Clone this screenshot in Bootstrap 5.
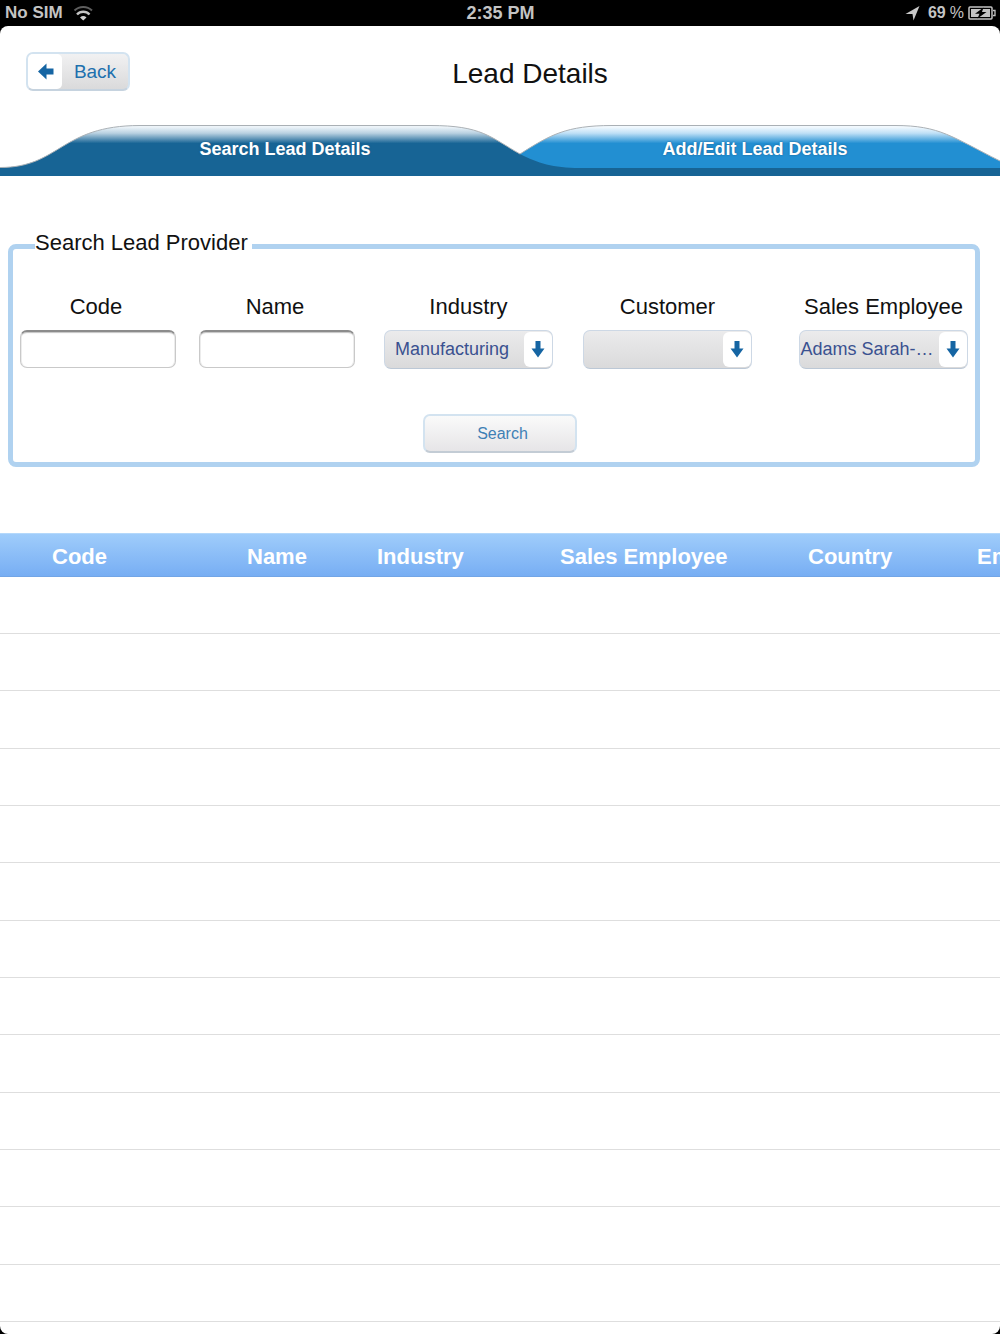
<!DOCTYPE html>
<html lang="en">
<head>
<meta charset="utf-8">
<meta name="viewport" content="width=device-width, initial-scale=1">
<title>Lead Details</title>
<link rel="stylesheet" href="https://cdn.jsdelivr.net/npm/bootstrap@5.3.0/dist/css/bootstrap.min.css">
<style>
body { background: #000; font-family: "Liberation Sans", Arial, sans-serif; color: #111; }
.status-bar { height: 26px; color: #c4c4c4; font-weight: 700; font-size: 17px; line-height: 26px; padding: 0 4px 0 5px; }
.status-side { flex: 1 1 0; }
.status-clock { font-size: 18px; }
.status-power { font-size: 16px; }
.app-sheet { border-radius: 8px; overflow: hidden; }

.top-row { height: 99px; padding: 26px 26px 0; display: grid; grid-template-columns: 1fr auto 1fr; align-items: start; }
.page-title { font-size: 28px; line-height: 44px; margin: 0 -60px 0 0; font-weight: 400; }
.glossy { border: 2px solid #d3e3f0; border-radius: 7px; background: linear-gradient(#f1f1f2, #dadadb); padding: 0; }
.back-btn { width: 104px; height: 39px; color: #2070ae; font-size: 19px; line-height: 36px; border-bottom-color: #c6d3df; }
.back-cap { width: 34px; background: #fff; border-radius: 5px; padding-left: 2px; }
.search-btn { width: 154px; height: 39px; color: #3f80b5; font-size: 16px; line-height: 34px; background: linear-gradient(#fafafa, #e6e5e7); border-bottom-color: #c3ccd5; padding-left: 5px; }

.tab-strip { height: 51px; }
.tab-shape { position: absolute; inset: 0; width: 100%; height: 100%; }
.tab-link { position: relative; color: #fff; font-size: 18px; font-weight: 700; line-height: 48px; text-decoration: none; text-align: center; text-shadow: 0 0 2px #1a5d8c; }
.tab-link:hover { color: #fff; }
.tab-search { width: 52%; padding-left: 50px; }
.tab-edit { width: 48%; padding-right: 10px; }

.search-box { margin: 57px 20px 0 8px; border: 5px solid #b0d2f0; border-radius: 8px; padding: 35px 7px 9px; }
.search-legend { font-size: 22px; line-height: 20px; background: #fff; padding: 0 4px 6px 0; margin: 0 0 0 15px; }
.field-grid { display: grid; grid-template-columns: 179fr 185fr 199fr 216fr 169px; }
.field-label { display: block; width: 100%; text-align: center; font-size: 22px; line-height: 26px; margin-bottom: 10px; white-space: nowrap; }
.text-cell { width: 156px; }
.text-cell .field-label { padding-right: 4px; }
.pick-cell { width: 169px; }
.text-entry { height: 38px; border: 1px solid #c9c9c9; border-top: 2px solid #8c8c8c; border-radius: 7px; box-shadow: inset 0 2px 1px -1px #c4c4c4, inset 1px 0 #ececec, inset -1px 0 #ececec; }
.pick-wrap { height: 39px; }
.pick-entry { appearance: none; height: 39px; border: 1px solid #cdd8e5; border-bottom-color: #bcc8d6; border-radius: 7px; background: linear-gradient(#ebebec, #dadadb); color: #3a5190; font-size: 18px; padding: 0 33px 0 0; text-align: center; text-align-last: center; width: 100%; }
.pick-cap { position: absolute; top: 2px; right: 1px; bottom: 2px; width: 28px; border-radius: 6px; background: #fff; pointer-events: none; }
.search-row { margin: 45px -12px 0 0; }

.lead-scroll { margin-top: 66px; overflow: hidden; }
.lead-table { width: 112%; table-layout: fixed; border-collapse: separate; border-spacing: 0; margin: 0; }
.lead-table thead tr { background: linear-gradient(#a0cdfb, #76adf3); }
.lead-table th { height: 44px; padding: 4px 0 0 52px; font-size: 22px; line-height: 26px; font-weight: 700; color: #fff; white-space: nowrap; border-top: 1px solid #b4d8fb; border-bottom: 1px solid #72a5e6; }
.lead-table td { height: 57px; border-bottom: 1px solid #dedede; }
.lead-table tbody tr:nth-child(3n) td { height: 58px; }
.c-code { width: 195px; } .c-name { width: 130px; } .c-ind { width: 183px; } .c-sales { width: 248px; } .c-country { width: 169px; }
</style>
<script src="https://cdn.jsdelivr.net/npm/bootstrap@5.3.0/dist/js/bootstrap.bundle.min.js"></script>
</head>
<body class="d-flex flex-column min-vh-100">
<header class="status-bar d-flex align-items-center">
  <div class="status-side d-flex align-items-center">
    <span>No SIM</span>
    <svg class="ms-2" width="22" height="18" viewBox="0 0 22 18" fill="none" aria-hidden="true">
      <path d="M3.500 6.500A12.500 12.500 0 0 1 21 6.500" stroke="#5e5e5e" stroke-width="2"/>
      <path d="M6 10.500A8.500 8.500 0 0 1 18.500 10.500" stroke="#c4c4c4" stroke-width="2.400"/>
      <path d="M9 13.500a5 5 0 0 1 6.500 0l-3.250 3z" fill="#d0d0d0"/>
    </svg>
  </div>
  <span class="status-clock">2:35 PM</span>
  <div class="status-side status-power d-flex align-items-center justify-content-end">
    <svg class="me-2" width="16" height="16" viewBox="0 0 16 16" aria-hidden="true"><path d="M15.500 1 9.500 15.500 8.500 9 1.500 9z" fill="#c8c8c8"/></svg>
    <span class="d-flex gap-1"><span>69</span><span class="fw-normal">%</span></span>
    <svg class="ms-1" width="28" height="14" viewBox="0 0 28 14" aria-hidden="true">
      <rect x="1" y="1" width="23" height="12" rx="1" fill="none" stroke="#c4c4c4" stroke-width="1.500"/>
      <rect x="3" y="3" width="19" height="8" fill="#c4c4c4"/>
      <path d="M25 4.500h2v5h-2" fill="none" stroke="#c4c4c4" stroke-width="1.300"/>
      <path d="M15.500 1.500 7 7.800h4.500L9.500 12.500 18.500 6H14z" fill="#000"/>
    </svg>
  </div>
</header>

<main class="app-sheet bg-white flex-grow-1">
  <div class="top-row">
    <button type="button" class="glossy back-btn d-flex">
      <span class="back-cap h-100 d-flex align-items-center justify-content-center">
        <svg width="16" height="17" viewBox="0 0 16 17" aria-hidden="true"><path d="M0 8.500 8.500.5V5.500H15.500v6H8.500v5z" fill="#1565a3"/></svg>
      </span>
      <span class="flex-grow-1">Back</span>
    </button>
    <h1 class="page-title">Lead Details</h1>
  </div>

  <nav class="tab-strip position-relative d-flex" aria-label="Lead sections">
    <svg class="tab-shape" viewBox="0 0 1000 51" preserveAspectRatio="none" aria-hidden="true">
      <defs>
        <linearGradient id="darkTab" gradientUnits="userSpaceOnUse" x1="0" y1="0" x2="0" y2="51">
          <stop offset="0.040" stop-color="#edf4f9"/><stop offset="0.160" stop-color="#b9d1e1"/><stop offset="0.360" stop-color="#176495"/><stop offset="1" stop-color="#176495"/>
        </linearGradient>
        <linearGradient id="lightTab" gradientUnits="userSpaceOnUse" x1="0" y1="0" x2="0" y2="51">
          <stop offset="0.040" stop-color="#f2f9fe"/><stop offset="0.160" stop-color="#bfe0f6"/><stop offset="0.360" stop-color="#228fd2"/><stop offset="1" stop-color="#228fd2"/>
        </linearGradient>
      </defs>
      <path d="M520 29C550 10 566 .5 612 .5H895C940 .5 952 12 1000 36V46H520z" fill="url(#lightTab)"/>
      <path d="M0 42.500C60 42.500 60 .5 140 .5H430C482 .5 490 12 520 29C538 38 553 43 580 43H1000V51H0z" fill="url(#darkTab)"/>
      <path d="M0 42.500C60 42.500 60 .5 140 .5H430C482 .5 490 12 520 29C550 10 566 .5 612 .5H895C940 .5 952 12 1000 36" fill="none" stroke="#aab0b5" stroke-width="1"/>
    </svg>
    <a class="tab-link tab-search" href="#search" aria-current="page">Search Lead Details</a>
    <a class="tab-link tab-edit" href="#edit">Add/Edit Lead Details</a>
  </nav>

  <form id="search">
    <fieldset class="search-box">
      <legend class="search-legend float-none w-auto">Search Lead Provider</legend>
      <div class="field-grid">
        <div class="text-cell">
          <label class="field-label" for="code">Code</label>
          <input class="form-control text-entry" id="code" type="text">
        </div>
        <div class="text-cell">
          <label class="field-label" for="name">Name</label>
          <input class="form-control text-entry" id="name" type="text">
        </div>
        <div class="pick-cell">
          <label class="field-label" for="industry">Industry</label>
          <div class="pick-wrap position-relative">
            <select class="pick-entry" id="industry"><option>Manufacturing</option></select>
            <span class="pick-cap d-flex align-items-center justify-content-center"><svg width="14" height="17" viewBox="0 0 14 17" aria-hidden="true"><path d="M4.500 0h5v7.500H13.500L7 16.500.5 7.500h4z" fill="#1565a3"/></svg></span>
          </div>
        </div>
        <div class="pick-cell">
          <label class="field-label" for="customer">Customer</label>
          <div class="pick-wrap position-relative">
            <select class="pick-entry" id="customer"><option></option></select>
            <span class="pick-cap d-flex align-items-center justify-content-center"><svg width="14" height="17" viewBox="0 0 14 17" aria-hidden="true"><path d="M4.500 0h5v7.500H13.500L7 16.500.5 7.500h4z" fill="#1565a3"/></svg></span>
          </div>
        </div>
        <div class="pick-cell">
          <label class="field-label" for="employee">Sales Employee</label>
          <div class="pick-wrap position-relative">
            <select class="pick-entry" id="employee"><option>Adams Sarah-…</option></select>
            <span class="pick-cap d-flex align-items-center justify-content-center"><svg width="14" height="17" viewBox="0 0 14 17" aria-hidden="true"><path d="M4.500 0h5v7.500H13.500L7 16.500.5 7.500h4z" fill="#1565a3"/></svg></span>
          </div>
        </div>
      </div>
      <div class="search-row d-flex justify-content-center">
        <button type="submit" class="glossy search-btn">Search</button>
      </div>
    </fieldset>
  </form>

  <div class="lead-scroll">
    <table class="lead-table">
      <colgroup><col class="c-code"><col class="c-name"><col class="c-ind"><col class="c-sales"><col class="c-country"><col></colgroup>
      <thead>
        <tr><th scope="col">Code</th><th scope="col">Name</th><th scope="col">Industry</th><th scope="col">Sales Employee</th><th scope="col">Country</th><th scope="col">Email</th></tr>
      </thead>
      <tbody>
        <tr><td colspan="6"></td></tr>
        <tr><td colspan="6"></td></tr>
        <tr><td colspan="6"></td></tr>
        <tr><td colspan="6"></td></tr>
        <tr><td colspan="6"></td></tr>
        <tr><td colspan="6"></td></tr>
        <tr><td colspan="6"></td></tr>
        <tr><td colspan="6"></td></tr>
        <tr><td colspan="6"></td></tr>
        <tr><td colspan="6"></td></tr>
        <tr><td colspan="6"></td></tr>
        <tr><td colspan="6"></td></tr>
        <tr><td colspan="6"></td></tr>
      </tbody>
    </table>
  </div>
</main>
</body>
</html>
